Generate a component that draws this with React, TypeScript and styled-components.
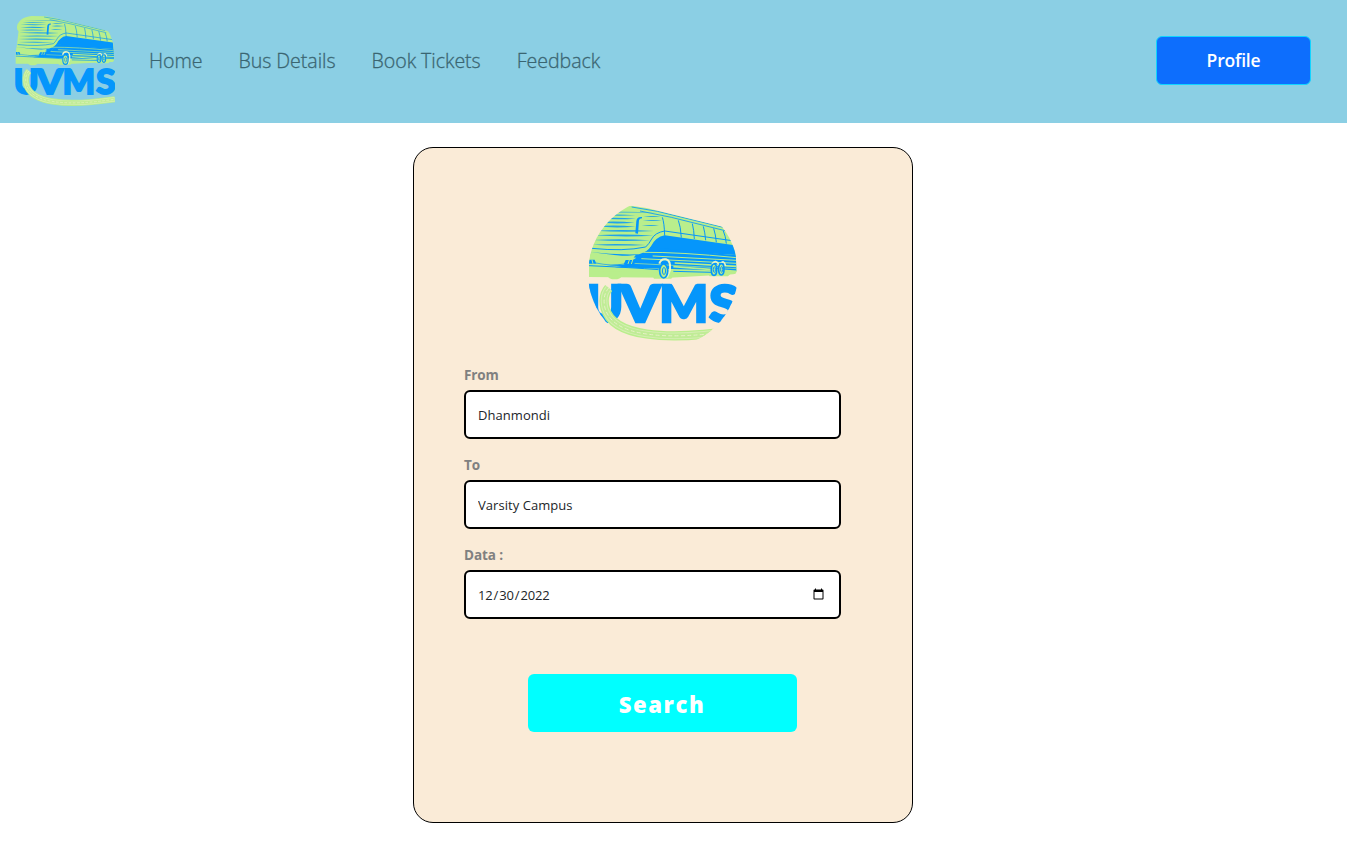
import React, { useId } from "react";
import styled, { createGlobalStyle } from "styled-components";

const GlobalStyle = createGlobalStyle`
  *, *::before, *::after { box-sizing: border-box; }
  body {
    margin: 0;
    background: #fff;
    color: #212529;
    font-family: "Segoe UI", "Open Sans", "Noto Sans", sans-serif;
  }
`;

const Header = styled.header`
  display: flex;
  align-items: center;
  height: 123px;
  padding: 0 36px 2px 15px;
  background: #8bcfe4;
`;

const Nav = styled.nav`
  display: flex;
  flex: 1;
  gap: 36px;
  margin-left: 34px;
  padding-top: 1px;
`;

const NavLink = styled.a`
  font-size: 19.6px;
  font-weight: 300;
  line-height: 30px;
  letter-spacing: -0.05px;
  color: #3a6571;
  -webkit-text-stroke: 0.3px #3a6571;
  text-decoration: none;
`;

const ProfileButton = styled.button`
  width: 155px;
  height: 49px;
  border: 1px solid #10d4ff;
  border-radius: 6px;
  background: #0d6efd;
  color: #fff;
  font: 600 17.5px/1 "Segoe UI", "Open Sans", sans-serif;
  letter-spacing: -0.2px;
`;

const SearchCard = styled.form`
  display: flex;
  flex-direction: column;
  width: 500px;
  height: 676px;
  margin: 24px 0 0 413px;
  padding: 50px 50px 0;
  border: 1px solid #000;
  border-radius: 20px;
  background: #faebd7;
`;

const RoundLogo = styled.div`
  align-self: center;
  width: 150px;
  height: 150px;
  margin-bottom: 17px;
  border-radius: 50%;
  overflow: hidden;
`;

const Field = styled.label`
  display: block;
  height: 90px;
`;

const FieldLabel = styled.span`
  display: block;
  height: 25px;
  padding-top: 1px;
  font-size: 13.5px;
  font-weight: 700;
  line-height: 18px;
  letter-spacing: -0.1px;
  color: #808080;
`;

const FieldInput = styled.input<{ $date?: boolean }>`
  display: block;
  width: 377px;
  height: 49px;
  padding: 0 12px 0 ${(p) => (p.$date ? 11 : 12)}px;
  border: 2px solid #000;
  border-radius: 6px;
  background: #fff;
  color: #212529;
  font: 400 13px/20px "Segoe UI", "Open Sans", sans-serif;
  letter-spacing: ${(p) => (p.$date ? -0.15 : 0.05)}px;
  outline: none;
`;

const SearchButton = styled.button`
  align-self: center;
  width: 269px;
  height: 58px;
  margin: 39px 2px 0 0;
  padding: 2px 0 0;
  border: 0;
  border-radius: 6px;
  background: #00ffff;
  color: #fff;
  font: 800 22px/1 "Segoe UI", "Open Sans", sans-serif;
  letter-spacing: 1.6px;
`;

const LogoSvg = styled.svg`
  display: block;
  flex: none;
`;

const BLUE = "#0596fb";
const GREEN = "#b9ee8c";

const BODY =
  "M27 246 L27 205 L34 150 L40 100 L34 92 Q28 65 54 46 Q70 34 99 31 L160 33 Q178 36 200 39 L430 96 Q445 99 451 112 L466 154 L470 230 L465 237 L270 248 Z";

const ROAD = "M86 279 Q66 302 75 339 Q92 402 200 417 Q300 432 473 406";

const LETTERS: [string, number, number][] = [
  ["U", 18, 112],
  ["V", 121, 120],
  ["M", 238, 147],
  ["S", 388, 88],
];

// Tapered speed lines over the windscreen: [x, y, length, thickness]
const FRONT_LINES = [
  [62, 51, 165, 2], [58, 60, 108, 3], [48, 70, 120, 4], [48, 82, 116, 5],
  [46, 94, 120, 5], [44, 107, 178, 5], [42, 121, 178, 5], [40, 135, 170, 5],
  [38, 149, 158, 4], [190, 64, 52, 3], [188, 76, 58, 3], [185, 91, 52, 3],
];

function Logo({ size }: { size: number }) {
  const bodyId = useId();
  return (
    <LogoSvg width={size} height={size} viewBox="0 0 150 150" role="img" aria-label="UVMS">
      <defs>
        <clipPath id={bodyId}>
          <path d={BODY} />
        </clipPath>
      </defs>
      <g transform="translate(-8 -3) scale(.33333)">
        <ellipse cx="104" cy="244" rx="20" ry="9" fill={GREEN} />
        <path d="M214 236 h68 l-8 15 h-52 Z M382 234 h72 l-10 10 h-55 Z" fill={GREEN} />
        <path d={BODY} fill={GREEN} />
        <g clipPath={`url(#${bodyId})`}>
          <g opacity=".85">
            {FRONT_LINES.map(([x, y, w, t]) => (
              <path key={`${x}-${y}`} d={`M${x} ${y} q${w * 0.5} ${-t} ${w} 1 q${-w * 0.5} ${t} ${-w} -1`} fill={BLUE} />
            ))}
          </g>
          <path d="M36 160 Q130 170 197 156 Q207 147 215 132 Q225 113 254 108 L470 139" fill="none" stroke={BLUE} strokeWidth="3" />
          <path d="M27 171 Q100 180 177 178 Q203 171 213 154 Q227 126 254 121 L464 151 L468 180 L320 171 L212 160 L194 182 L158 215 L80 211 Q145 207 169 188 Z" fill={BLUE} />
          <path d="M212 157 L470 181 L470 228 L105 217 L158 207 L190 184 Z" fill={BLUE} />
          <g fill="none" stroke={GREEN}>
            <path d="M190 172 Q300 171 470 188" strokeWidth="3" />
            <path d="M218 183 L470 196" strokeWidth="3" />
            <path d="M184 191 L470 205" strokeWidth="3" />
            <path d="M284 204 L470 214" strokeWidth="5" />
            <path d="M160 205 L470 221" strokeWidth="2" />
            <path d="M280 215 L470 229" strokeWidth="5" />
            <path d="M27 224 L130 225 L470 238" strokeWidth="8" />
          </g>
          <path d="M27 212 Q160 218 236 224 M280 229 L395 232" fill="none" stroke={BLUE} strokeWidth="3" />
          <path d="M27 175 Q105 187 167 180 L156 195 L130 209 L27 204 Z" fill={GREEN} />
          <path d="M48 204 Q95 214 132 207" fill="none" stroke={BLUE} strokeWidth="2" />
          <path d="M27 194 h17 l5 12 h-22 Z M137 195 h30 l-4 13 h-32 Z" fill={BLUE} />
          <path d="M36 195 l3 11 M148 195 l-4 12 M158 195 l-4 12" stroke={GREEN} strokeWidth="3" />
          <path d="M155 36 L232 49 L430 97 M180 48 L274 67 L435 107" fill="none" stroke={BLUE} strokeWidth="2.5" />
          <g fill="none" stroke={BLUE} strokeWidth="3">
            <path d="M247 67 Q253 84 254 122" />
            <path d="M295 76 Q302 94 304 128" />
            <path d="M337 86 Q342 105 343 132" />
            <path d="M370 94 Q375 112 377 136" />
            <path d="M401 100 Q407 119 409 142" />
            <path d="M430 108 Q437 123 439 146" />
          </g>
        </g>
        <path d="M186 66 Q171 64 169 78 L166 115 L174 116 L177 76 Q178 70 186 70 Z" fill={BLUE} />
        <path d="M238 206 Q243 190 258 193 Q273 196 270 226 L261 247" fill="none" stroke="#e8f4c8" strokeWidth="6" />
        <path d="M396 207 Q407 191 417 210 M422 207 Q431 192 437 213" fill="none" stroke="#e8f4c8" strokeWidth="5" />
        {[[251, 228, 12, 21], [402, 224, 8, 17], [424, 223, 8, 17]].map(([cx, cy, rx, ry]) => (
          <g key={cx}>
            <ellipse cx={cx} cy={cy} rx={rx} ry={ry} fill={GREEN} stroke={BLUE} strokeWidth="5" />
            <ellipse cx={cx + 1} cy={cy} rx={rx * 0.4} ry={ry * 0.5} fill={GREEN} stroke={BLUE} strokeWidth="3" />
          </g>
        ))}
        <g fill={BLUE} stroke={BLUE} strokeWidth="8" fontFamily="Lato, sans-serif" fontWeight="900" fontSize="153">
          {LETTERS.map(([char, x, width]) => (
            <text key={char} x={x} y="381" textLength={width} lengthAdjust="spacingAndGlyphs">
              {char}
            </text>
          ))}
        </g>
        <g fill="none">
          <path d={ROAD} stroke={GREEN} strokeWidth="28" />
          <path d={ROAD} stroke="#d6eeb4" strokeWidth="20" />
          <path d={ROAD} stroke="#c0ec96" strokeWidth="14" />
          <path d={ROAD} stroke="#e6f1c6" strokeWidth="3" strokeDasharray="12 7" />
        </g>
      </g>
    </LogoSvg>
  );
}

const LINKS = ["Home", "Bus Details", "Book Tickets", "Feedback"];

export default function App() {
  return (
    <>
      <GlobalStyle />
      <Header>
        <Logo size={100} />
        <Nav>
          {LINKS.map((name) => (
            <NavLink key={name}>{name}</NavLink>
          ))}
        </Nav>
        <ProfileButton>Profile</ProfileButton>
      </Header>
      <main>
        <SearchCard>
          <RoundLogo>
            <Logo size={150} />
          </RoundLogo>
          <Field>
            <FieldLabel>From</FieldLabel>
            <FieldInput defaultValue="Dhanmondi" />
          </Field>
          <Field>
            <FieldLabel>To</FieldLabel>
            <FieldInput defaultValue="Varsity Campus" />
          </Field>
          <Field>
            <FieldLabel>Data :</FieldLabel>
            <FieldInput $date type="date" defaultValue="2022-12-30" />
          </Field>
          <SearchButton type="button">Search</SearchButton>
        </SearchCard>
      </main>
    </>
  );
}
